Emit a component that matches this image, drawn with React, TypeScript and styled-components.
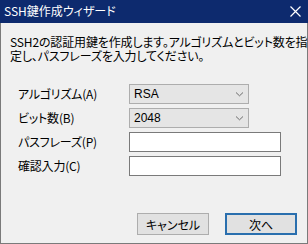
import React from "react";
import styled, { createGlobalStyle } from "styled-components";

const Global = createGlobalStyle`
  html, body { margin: 0; padding: 0; background: #f0f0f0; }
  * { box-sizing: border-box; }
`;

const FONT = `"Noto Sans CJK JP", "Liberation Sans", sans-serif`;

const Window = styled.div`
  width: 308px;
  height: 244px;
  display: flex;
  flex-direction: column;
  font-family: ${FONT};
  font-size: 12px;
  color: #000;
  font-feature-settings: "palt";
`;

const TitleBar = styled.div`
  height: 23px;
  flex: none;
  background: #0d2a6e;
  color: #fff;
  display: flex;
  align-items: center;
  justify-content: space-between;
  padding: 0 7px 1px 4px;
  font-size: 12px;
  line-height: 14px;
`;

const Body = styled.div`
  flex: 1;
  display: flex;
  flex-direction: column;
  background: #f0f0f0;
  border: 1px solid #7a7a7a;
  border-top: none;
  padding: 12px 0 0 9px;
`;

const Description = styled.p`
  margin: 0;
  line-height: 14px;
  letter-spacing: -0.15px;
`;

const Line = styled.span`
  display: block;
  white-space: nowrap;
`;

const Form = styled.div`
  display: grid;
  grid-template-columns: 111px auto;
  row-gap: 4px;
  margin-top: 21px;
  padding-left: 8px;
  align-items: center;
`;

const Label = styled.label`
  line-height: 20px;
  white-space: nowrap;
  letter-spacing: -0.2px;
`;

const Select = styled.div`
  width: 120px;
  height: 20px;
  background: #e5e5e5;
  border: 1px solid #adadad;
  display: flex;
  align-items: center;
  justify-content: space-between;
  padding: 0 4px 0 4px;
  font-family: "Liberation Sans", sans-serif;
  font-size: 12px;
`;

const Input = styled.div`
  width: 152px;
  height: 20px;
  background: #fff;
  border: 1px solid #7a7a7a;
`;

const ButtonRow = styled.div`
  margin-top: auto;
  display: flex;
  justify-content: flex-end;
  gap: 16px;
  padding: 0 10px 8px 0;
`;

const Button = styled.button<{ $primary?: boolean }>`
  width: 72px;
  height: 22px;
  margin: 0;
  padding: 0;
  font-family: ${FONT};
  font-size: 12px;
  font-feature-settings: "palt";
  color: #000;
  background: #e1e1e1;
  border: ${(p) => (p.$primary ? "2px solid #2a6fae" : "1px solid #adadad")};
  display: flex;
  align-items: center;
  justify-content: center;
`;

const Chevron = () => (
  <svg width="9" height="6" viewBox="0 0 9 6">
    <path d="M1 1.5 L4.5 4.8 L8 1.5" fill="none" stroke="#6d6d6d" strokeWidth="1" />
  </svg>
);

const CloseIcon = () => (
  <svg width="11" height="11" viewBox="0 0 11 11">
    <path d="M0.5 0.5 L10.5 10.5 M10.5 0.5 L0.5 10.5" stroke="#fff" strokeWidth="1.2" />
  </svg>
);

export default function App() {
  return (
    <>
      <Global />
      <Window>
        <TitleBar>
          <span>SSH鍵作成ウィザード</span>
          <CloseIcon />
        </TitleBar>
        <Body>
          <Description>
            <Line>SSH2の認証用鍵を作成します。アルゴリズムとビット数を指</Line>
            <Line>定し、パスフレーズを入力してください。</Line>
          </Description>
          <Form>
            <Label>アルゴリズム(A)</Label>
            <Select>
              <span>RSA</span>
              <Chevron />
            </Select>
            <Label>ビット数(B)</Label>
            <Select>
              <span>2048</span>
              <Chevron />
            </Select>
            <Label>パスフレーズ(P)</Label>
            <Input />
            <Label>確認入力(C)</Label>
            <Input />
          </Form>
          <ButtonRow>
            <Button>キャンセル</Button>
            <Button $primary>次へ</Button>
          </ButtonRow>
        </Body>
      </Window>
    </>
  );
}
